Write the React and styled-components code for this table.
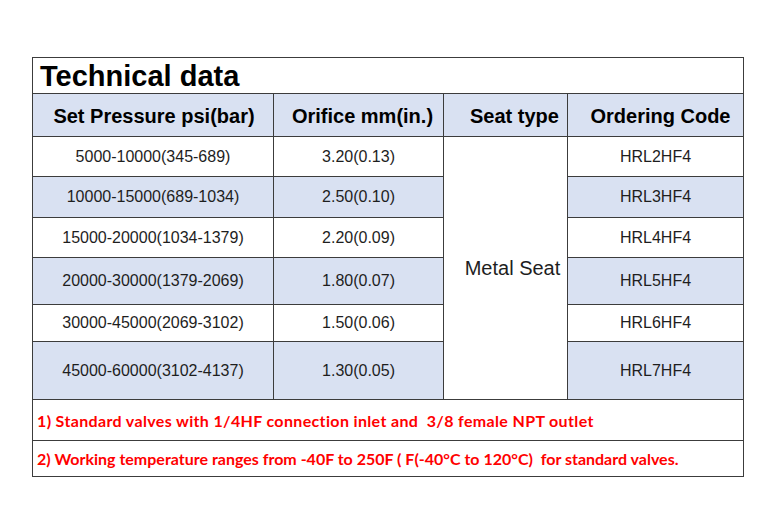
import styled, { createGlobalStyle } from "styled-components";

const GlobalStyle = createGlobalStyle`
  html, body {
    margin: 0;
    padding: 0;
    background: #ffffff;
  }
`;

const Page = styled.div`
  padding: 57px 0 0 32px;
  font-family: "Liberation Sans", Arial, sans-serif;
`;

const Table = styled.table`
  border-collapse: collapse;
  table-layout: fixed;
  width: 711px;
  color: #1e1e1e;
`;

const Row = styled.tr`
  height: ${(p) => p.$h}px;
  background: ${(p) => (p.$shade ? "#d9e1f2" : "#ffffff")};
`;

const Cell = styled.td`
  border: 1px solid #3c3c3c;
  padding: 0;
  text-align: center;
  vertical-align: middle;
  font-size: 16px;
  white-space: nowrap;
`;

const TitleCell = styled(Cell)`
  text-align: left;
  padding-left: 7px;
  padding-top: 2px;
  font-size: 29px;
  font-weight: bold;
  color: #000;
`;

const HeadCell = styled(Cell)`
  font-size: 20px;
  font-weight: bold;
  color: #000;
  padding-left: ${(p) => p.$shift || 0}px;
  padding-top: 2px;
`;

const SeatCell = styled(Cell)`
  background: #ffffff;
  font-size: 20px;
  padding-left: 14px;
`;

const NoteCell = styled(Cell)`
  text-align: left;
  padding-left: 4px;
  font-family: Lato, "Open Sans", sans-serif;
  font-weight: bold;
  font-size: 16px;
  letter-spacing: ${(p) => p.$spread || 0}px;
  color: #ff0000;
`;

const rows = [
  { p: "5000-10000(345-689)", o: "3.20(0.13)", c: "HRL2HF4", h: 40 },
  { p: "10000-15000(689-1034)", o: "2.50(0.10)", c: "HRL3HF4", h: 41 },
  { p: "15000-20000(1034-1379)", o: "2.20(0.09)", c: "HRL4HF4", h: 40 },
  { p: "20000-30000(1379-2069)", o: "1.80(0.07)", c: "HRL5HF4", h: 47 },
  { p: "30000-45000(2069-3102)", o: "1.50(0.06)", c: "HRL6HF4", h: 37 },
  { p: "45000-60000(3102-4137)", o: "1.30(0.05)", c: "HRL7HF4", h: 58 },
];

export default function App() {
  return (
    <>
      <GlobalStyle />
      <Page>
        <Table>
          <colgroup>
            <col style={{ width: 241 }} />
            <col style={{ width: 170 }} />
            <col style={{ width: 124 }} />
            <col style={{ width: 176 }} />
          </colgroup>
          <tbody>
            <Row $h={36}>
              <TitleCell colSpan={4}>Technical data</TitleCell>
            </Row>
            <Row $h={43} $shade>
              <HeadCell $shift={2}>Set Pressure psi(bar)</HeadCell>
              <HeadCell $shift={8}>Orifice mm(in.)</HeadCell>
              <HeadCell $shift={18}>Seat type</HeadCell>
              <HeadCell $shift={10}>Ordering Code</HeadCell>
            </Row>
            {rows.map((r, i) => (
              <Row key={r.c} $h={r.h} $shade={i % 2 === 1}>
                <Cell>{r.p}</Cell>
                <Cell>{r.o}</Cell>
                {i === 0 && <SeatCell rowSpan={rows.length}>Metal Seat</SeatCell>}
                <Cell>{r.c}</Cell>
              </Row>
            ))}
            <Row $h={41}>
              <NoteCell colSpan={4} $spread={0.35}>
                1) Standard valves with 1/4HF connection inlet and&nbsp; 3/8 female NPT outlet
              </NoteCell>
            </Row>
            <Row $h={36}>
              <NoteCell colSpan={4}>
                2) Working temperature ranges from -40F to 250F ( F(-40°C to 120°C)&nbsp; for standard valves.
              </NoteCell>
            </Row>
          </tbody>
        </Table>
      </Page>
    </>
  );
}
